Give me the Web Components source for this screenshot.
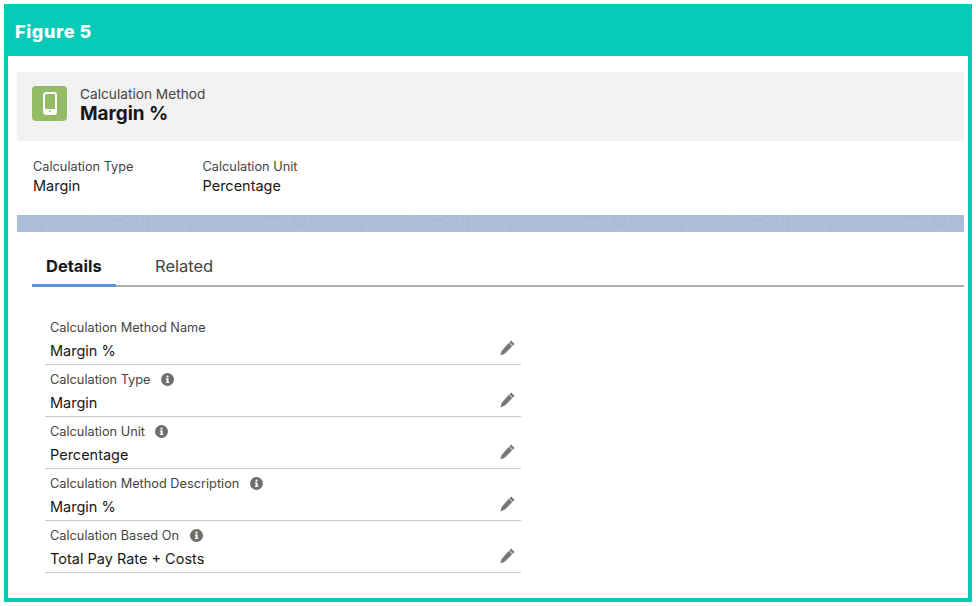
<!DOCTYPE html>
<html>
<head>
<meta charset="utf-8">
<title>Figure 5</title>
<style>
  html, body { margin: 0; background: #fff; }
  body { font-family: Inter, "Liberation Sans", sans-serif; color: #181818; }
</style>
</head>
<body>
<figure-frame heading="Figure 5">
  <record-header object="Calculation Method" name="Margin %"></record-header>
  <highlight-panel>
    <highlight-item label="Calculation Type" value="Margin"></highlight-item>
    <highlight-item label="Calculation Unit" value="Percentage"></highlight-item>
  </highlight-panel>
  <contour-band></contour-band>
  <record-tabs>
    <tab-item active>Details</tab-item>
    <tab-item>Related</tab-item>
  </record-tabs>
  <detail-list>
    <detail-field label="Calculation Method Name" value="Margin %"></detail-field>
    <detail-field label="Calculation Type" value="Margin" info></detail-field>
    <detail-field label="Calculation Unit" value="Percentage" info></detail-field>
    <detail-field label="Calculation Method Description" value="Margin %" info></detail-field>
    <detail-field label="Calculation Based On" value="Total Pay Rate + Costs" info></detail-field>
  </detail-list>
</figure-frame>

<script>
class FigureFrame extends HTMLElement {
    connectedCallback() {
        this.attachShadow({ mode: 'open' });
        this.shadowRoot.innerHTML = `
            <style>
                :host { display: block; box-sizing: border-box; width: 968px; height: 598px; margin: 4px 0 0 4px; border: 4px solid #08cbb8; border-top: 0; }
                header { height: 52px; margin: 0 -4px; padding-left: 11px; background: #08cbb8; color: #fff; font: 800 18px/55px Inter, sans-serif; letter-spacing: .6px; }
                main { padding: 16px 4px 0 9px; }
            </style>
            <header>${this.getAttribute('heading')}</header>
            <main><slot></slot></main>
        `;
    }
}

class RecordHeader extends HTMLElement {
    connectedCallback() {
        this.attachShadow({ mode: 'open' });
        this.shadowRoot.innerHTML = `
            <style>
                :host { display: flex; align-items: center; gap: 13px; height: 69px; box-sizing: border-box; padding: 0 0 6px 15px; background: #f2f2f2; }
                .icon { width: 35px; height: 35px; border-radius: 4px; background: #95bb66; display: flex; align-items: center; justify-content: center; }
                .text { margin-top: 3px; }
                .object { font-size: 13.7px; line-height: 16px; color: #444; }
                .name { font-size: 18.9px; line-height: 23px; font-weight: 700; color: #181818; }
            </style>
            <div class="icon">
                <svg width="14" height="23" viewBox="0 0 14 23">
                    <rect x="1" y="1" width="12" height="21" rx="2" fill="none" stroke="#fff" stroke-width="1.9"/>
                    <rect x="1" y="17" width="12" height="4" fill="#fff"/>
                    <circle cx="7" cy="19.200" r=".9" fill="#95bb66"/>
                </svg>
            </div>
            <div class="text">
                <div class="object">${this.getAttribute('object')}</div>
                <div class="name">${this.getAttribute('name')}</div>
            </div>
        `;
    }
}

class HighlightPanel extends HTMLElement {
    connectedCallback() {
        this.attachShadow({ mode: 'open' });
        this.shadowRoot.innerHTML = `
            <style>
                :host { display: flex; gap: 69px; height: 74px; padding: 17px 0 0 16px; box-sizing: border-box; }
            </style>
            <slot></slot>
        `;
    }
}

class HighlightItem extends HTMLElement {
    connectedCallback() {
        this.attachShadow({ mode: 'open' });
        this.shadowRoot.innerHTML = `
            <style>
                :host { display: block; }
                .label { font-size: 12.75px; line-height: 17px; color: #444; }
                .value { font-size: 14.5px; line-height: 22px; color: #181818; }
            </style>
            <div class="label">${this.getAttribute('label')}</div>
            <div class="value">${this.getAttribute('value')}</div>
        `;
    }
}

class ContourBand extends HTMLElement {
    connectedCallback() {
        this.attachShadow({ mode: 'open' });
        // the contour artwork repeats about every 320px
        const tile = [
            'M30 17c-3-6-2-12 4-17',
            'M56 17L70 0M60 17L74 0M64 17L78 0M68 17L80 3',
            'M82 17c2-10 12-16 22-15 8 1 12 7 14 15',
            'M88 17c3-6 9-10 16-9 5 1 8 4 9 9',
            'M122 17c-2-6 2-11 0-17M128 17c-2-6 2-11 0-17M134 17c-1-6 2-11 1-17',
            'M140 17c3-10 10-15 18-14 6 1 10 7 11 14',
            'M176 0c5 5 9 11 12 17',
            'M206 0c3 6 6 12 9 17 4-6 8-12 10-17',
            'M238 17c3-6 8-11 20-9 6-1 10-3 12-8',
            'M272 0c0 8 4 15 10 16 6 1 10-6 10-16',
            'M300 17c2-8 8-13 20-14'
        ].map(d => `<path d="${d}"/>`).join('');
        this.shadowRoot.innerHTML = `
            <style>
                :host { display: block; height: 17px; }
                svg { display: block; width: 100%; height: 17px; background: #abbdd9; }
                path { fill: none; stroke: #b4c5dd; stroke-width: 1; }
            </style>
            <svg width="947" height="17">
                <defs><pattern id="contours" width="320" height="17" patternUnits="userSpaceOnUse">${tile}</pattern></defs>
                <rect width="947" height="17" fill="url(#contours)"/>
            </svg>
        `;
    }
}

class RecordTabs extends HTMLElement {
    connectedCallback() {
        this.attachShadow({ mode: 'open' });
        this.shadowRoot.innerHTML = `
            <style>
                :host { display: flex; height: 55px; box-sizing: border-box; margin-left: 15px; border-bottom: 2px solid #aeaeae; align-items: flex-end; }
            </style>
            <slot></slot>
        `;
    }
}

class TabItem extends HTMLElement {
    connectedCallback() {
        this.attachShadow({ mode: 'open' });
        this.shadowRoot.innerHTML = `
            <style>
                :host { display: block; box-sizing: border-box; height: 33px; margin-bottom: -2px; padding: 0 14px; width: 84px; font-size: 16.5px; line-height: 24px; color: #444; border-bottom: 3px solid transparent; }
                :host([active]) { font-weight: 700; color: #181818; border-bottom-color: #5a93e0; }
                :host(:not([active])) { margin-left: 25px; width: 100px; }
            </style>
            <slot></slot>
        `;
    }
}

class DetailList extends HTMLElement {
    connectedCallback() {
        this.attachShadow({ mode: 'open' });
        this.shadowRoot.innerHTML = `
            <style>
                :host { display: block; width: 476px; margin: 26px 0 0 28px; }
            </style>
            <slot></slot>
        `;
    }
}

class DetailField extends HTMLElement {
    connectedCallback() {
        this.attachShadow({ mode: 'open' });
        const info = this.hasAttribute('info') ? `
            <svg class="info" width="13" height="13" viewBox="0 0 14 14">
                <circle cx="7" cy="7" r="7" fill="#706e6b"/>
                <rect x="6" y="6" width="2.2" height="4.6" fill="#fff"/>
                <rect x="5.2" y="9.8" width="3.8" height="1" fill="#fff"/>
                <rect x="5.2" y="6" width="2" height="1" fill="#fff"/>
                <circle cx="7" cy="4" r="1.2" fill="#fff"/>
            </svg>` : '';
        this.shadowRoot.innerHTML = `
            <style>
                :host { display: block; box-sizing: border-box; height: 52px; padding-left: 5px; border-bottom: 1px solid #c9c9c9; }
                .label { display: flex; align-items: center; gap: 10.5px; height: 20px; padding-top: 4px; font-size: 12.75px; color: #444; }
                .row { display: flex; justify-content: space-between; padding: 3px 6px 0 0; font-size: 14.5px; line-height: 22px; color: #181818; }
                .pencil { display: block; }
            </style>
            <div class="label">${this.getAttribute('label')}${info}</div>
            <div class="row">
                <span>${this.getAttribute('value')}</span>
                <svg class="pencil" width="16" height="16" viewBox="0 0 16 16">
                    <path d="M12.200.6l3.400 3.400-1.800 1.800-3.400-3.400zM9.800 2.800l3.400 3.400-7.200 7.200-4.700 2 1.300-4.400z" fill="#777"/>
                </svg>
            </div>
        `;
    }
}

customElements.define('figure-frame', FigureFrame);
customElements.define('record-header', RecordHeader);
customElements.define('highlight-panel', HighlightPanel);
customElements.define('highlight-item', HighlightItem);
customElements.define('contour-band', ContourBand);
customElements.define('record-tabs', RecordTabs);
customElements.define('tab-item', TabItem);
customElements.define('detail-list', DetailList);
customElements.define('detail-field', DetailField);
</script>
</body>
</html>
